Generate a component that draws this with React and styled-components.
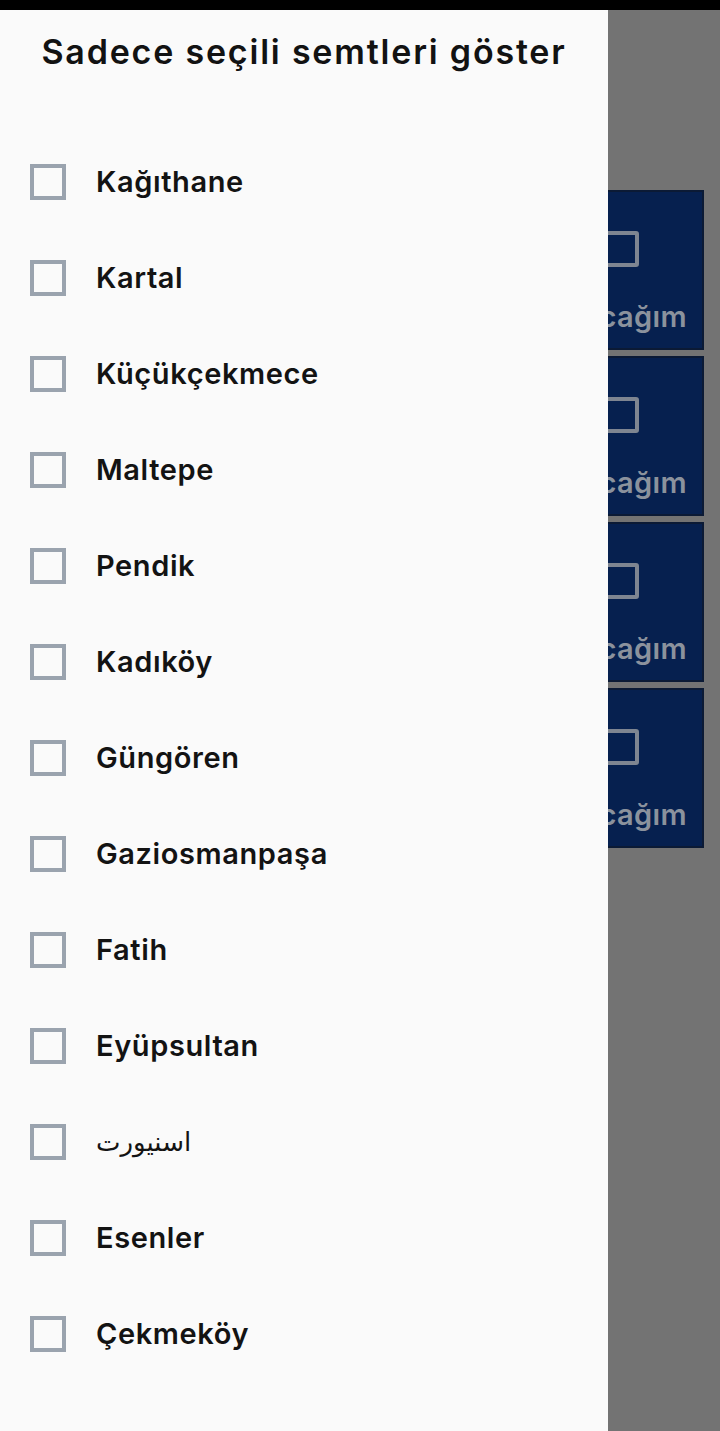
import React from "react";
import styled, { createGlobalStyle } from "styled-components";

const Global = createGlobalStyle`
  html, body { margin: 0; padding: 0; background: #000; }
  body { font-family: Inter, "Open Sans", "DejaVu Sans", sans-serif; }
  * { box-sizing: border-box; }
`;

const Screen = styled.div`
  position: relative;
  width: 720px;
  height: 1431px;
  overflow: hidden;
  display: flex;
  flex-direction: column;
  background: #000;
`;

const StatusBar = styled.div`
  height: 10px;
  flex: none;
  background: #000;
`;

const Body = styled.div`
  position: relative;
  flex: 1;
`;

/* page under the dimming scrim */
const Page = styled.div`
  height: 100%;
  background: #737373;
  display: flex;
  justify-content: flex-end;
  padding: 180px 16px 0 0;
`;

const CardColumn = styled.div`
  width: 166px;
  display: flex;
  flex-direction: column;
  gap: 6px;
`;

const Card = styled.div`
  height: 160px;
  background: #06204f;
  border: 2px solid #0b1a35;
  border-left: none;
  display: flex;
  flex-direction: column;
  align-items: center;
  padding-top: 39px;
`;

const CardBox = styled.div`
  width: 38px;
  height: 36px;
  border: 4px solid #7e8591;
  border-radius: 3px;
`;

const CardLabel = styled.span`
  margin-top: 32px;
  font-size: 29px;
  line-height: 36px;
  font-weight: 600;
  letter-spacing: 0.4px;
  color: #8b929d;
  white-space: nowrap;
`;

const Drawer = styled.aside`
  position: absolute;
  top: 0;
  left: 0;
  bottom: 0;
  width: 608px;
  background: #fafafa;
  display: flex;
  flex-direction: column;
  padding-top: 22px;
`;

const Title = styled.h1`
  margin: 0;
  text-align: center;
  font-size: 34px;
  line-height: 40px;
  font-weight: 600;
  letter-spacing: 1.8px;
  color: #121212;
`;

const List = styled.ul`
  list-style: none;
  margin: 0;
  padding: 62px 0 0 30px;
  display: flex;
  flex-direction: column;
`;

const Row = styled.li`
  height: 96px;
  display: flex;
  align-items: center;
  gap: 30px;
`;

const Box = styled.span`
  width: 36px;
  height: 36px;
  flex: none;
  border: 4px solid #9aa3ae;
  background: #fafafa;
`;

const Label = styled.span`
  font-size: ${(p) => (p.$rtl ? "26px" : "29px")};
  line-height: 36px;
  font-weight: ${(p) => (p.$rtl ? 400 : 600)};
  font-family: ${(p) => (p.$rtl ? '"DejaVu Sans", sans-serif' : "inherit")};
  letter-spacing: ${(p) => (p.$rtl ? "0" : "0.6px")};
  color: #131313;
  margin-top: -1px;
`;

const districts = [
  "Kağıthane",
  "Kartal",
  "Küçükçekmece",
  "Maltepe",
  "Pendik",
  "Kadıköy",
  "Güngören",
  "Gaziosmanpaşa",
  "Fatih",
  "Eyüpsultan",
  "اسنيورت",
  "Esenler",
  "Çekmeköy",
];

const isRtl = (s) => /[\u0600-\u06FF]/.test(s);

export default function App() {
  return (
    <Screen>
      <Global />
      <StatusBar />
      <Body>
        <Page>
          <CardColumn>
            {[0, 1, 2, 3].map((i) => (
              <Card key={i}>
                <CardBox />
                <CardLabel>Alacağım</CardLabel>
              </Card>
            ))}
          </CardColumn>
        </Page>
        <Drawer>
          <Title>Sadece seçili semtleri göster</Title>
          <List>
            {districts.map((d) => (
              <Row key={d}>
                <Box />
                <Label $rtl={isRtl(d)}>{d}</Label>
              </Row>
            ))}
          </List>
        </Drawer>
      </Body>
    </Screen>
  );
}
